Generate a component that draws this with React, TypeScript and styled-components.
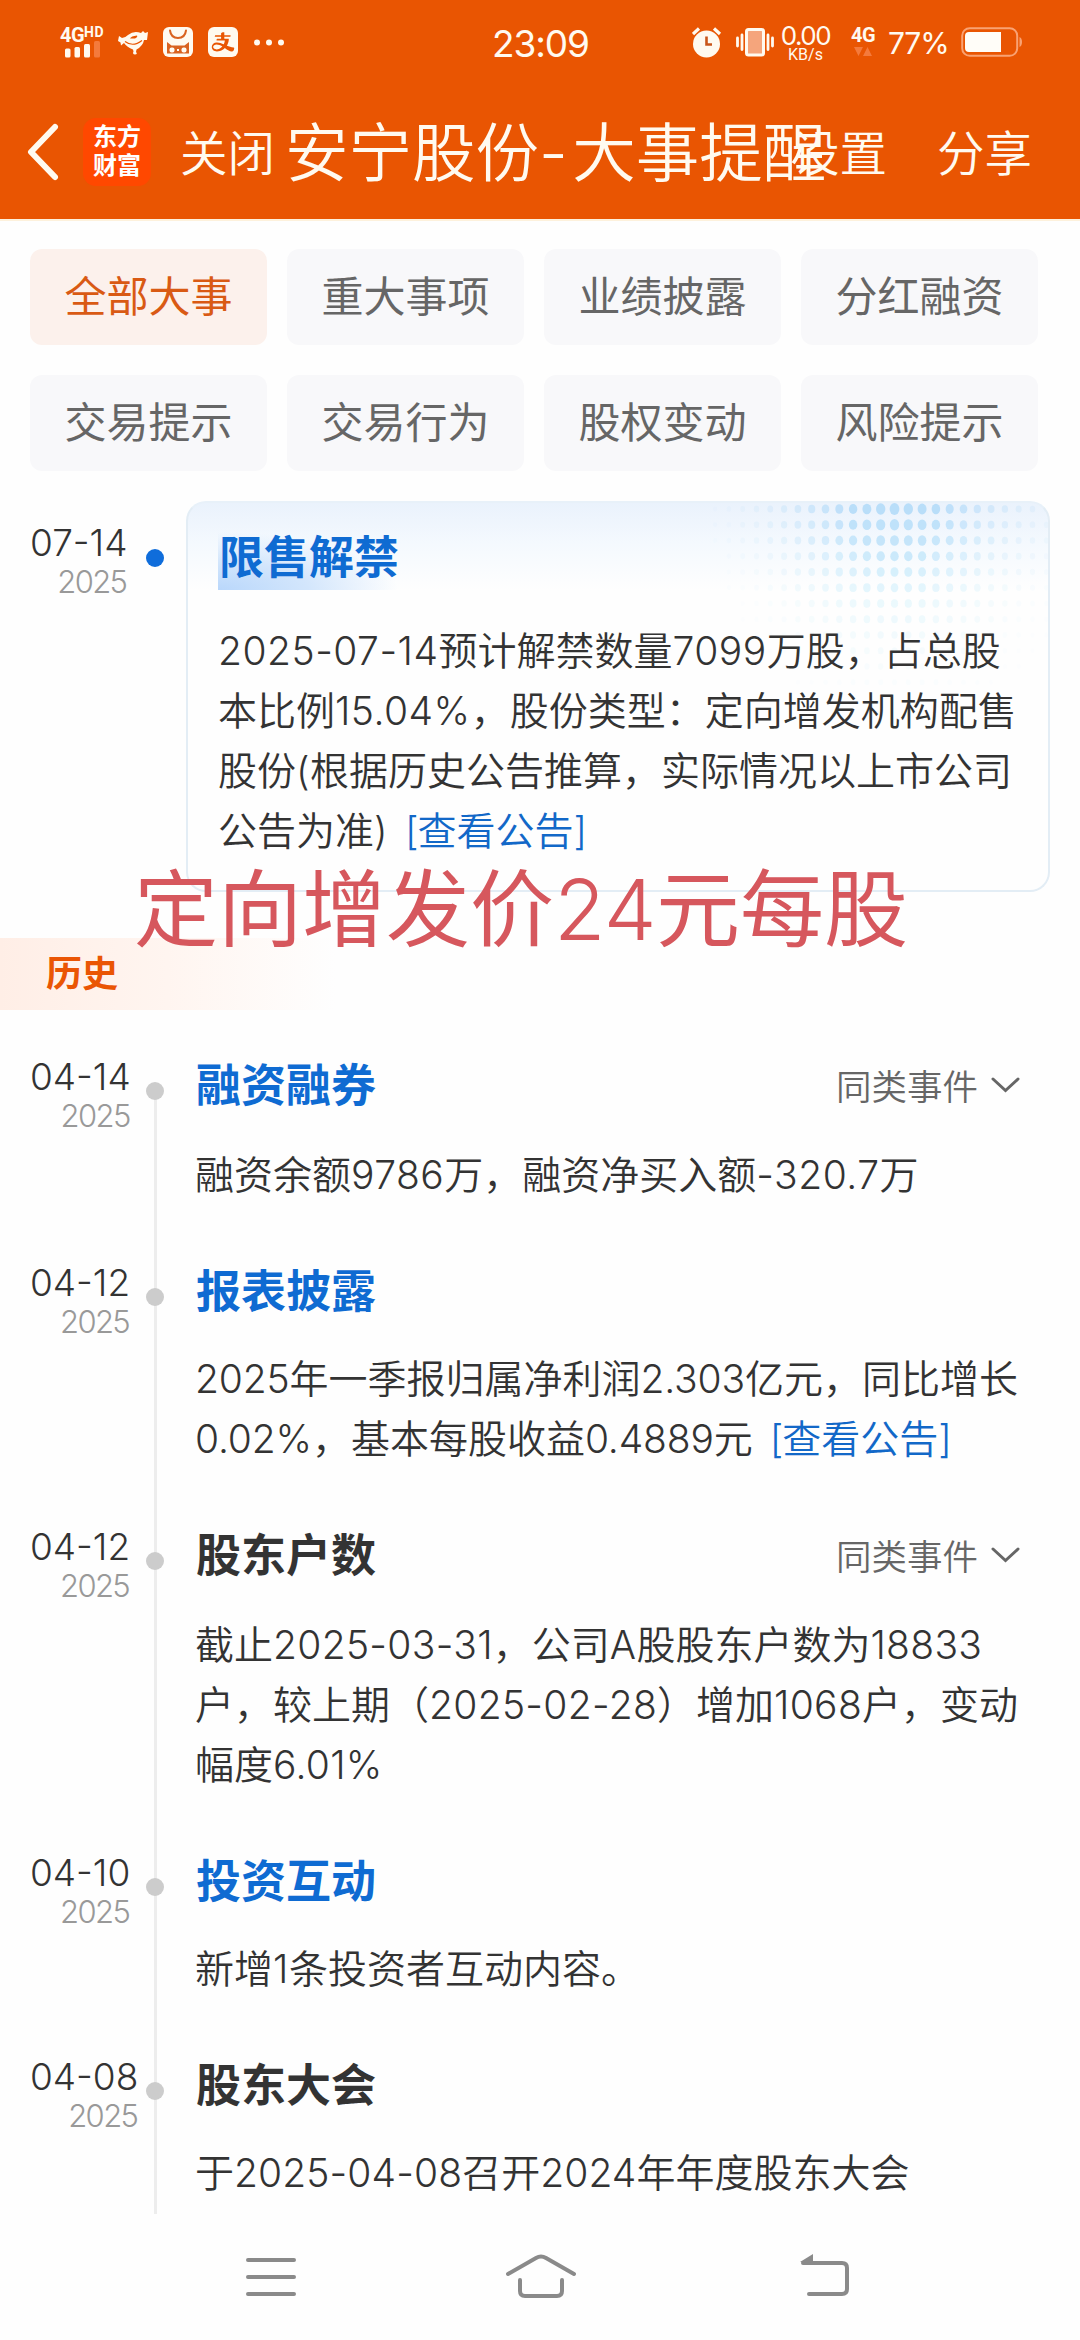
import React from 'react';
import styled, { createGlobalStyle } from 'styled-components';
import { AiFillAlipaySquare } from 'react-icons/ai';

const CJK = '"Noto Sans CJK SC", sans-serif';

const GlobalStyle = createGlobalStyle`
  * { box-sizing: border-box; }
  body { margin: 0; background: #fefefe; font-family: ${CJK}; }
`;

/* ---------- shared text ---------- */

const Latin = styled.span<{ $tight: number }>`
  font-family: Inter, Roboto, sans-serif;
  letter-spacing: ${(p) => p.$tight}em;
`;

/** Sets digits and latin signs in the numeric face, leaving Chinese text alone. */
function Mixed({ text, tight = 0.013 }: { text: string; tight?: number }) {
  const parts = text.split(/([0-9A-Za-z.\-%()[\]]+)/);
  return (
    <>
      {parts.map((part, i) =>
        i % 2 ? (
          <Latin key={i} $tight={tight}>{part}</Latin>
        ) : (
          part
        ),
      )}
    </>
  );
}

/* ---------- page ---------- */

const Screen = styled.div`
  position: relative;
  display: flex;
  flex-direction: column;
  width: 1080px;
  height: 2340px;
  overflow: hidden;
  background: #fefefe;
  color: #333;
`;

const Header = styled.header`
  flex: none;
  height: 221px;
  background: #e95502;
  border-bottom: 2px solid #fdf1dc;
  color: #fffaf0;
`;

/* ---------- status bar ---------- */

const StatusBar = styled.div`
  display: grid;
  grid-template-columns: 432px 1fr 388px;
  align-items: start;
  height: 84px;
  padding-left: 60px;
`;

const StatusGroup = styled.div`
  display: flex;
  align-items: flex-start;
  padding-top: 27px;
`;

const Signal = styled.div`
  width: 58px;
  height: 30px;
`;

const SmallSvg = styled.svg`
  display: block;
`;

const NetLabel = styled.div`
  display: flex;
  height: 16px;
  font: 700 20px/16px Roboto, sans-serif;
  letter-spacing: -0.5px;
`;

const HdLabel = styled.span`
  font: 700 14px/10px Roboto, sans-serif;
  letter-spacing: 0.4px;
`;

const StatusGlyph = styled.svg<{ $gap?: number }>`
  display: block;
  flex: none;
  margin-right: ${(p) => p.$gap ?? 0}px;
`;

const AlipayTile = styled.span`
  display: flex;
  align-items: center;
  justify-content: center;
  width: 30px;
  height: 30px;
  margin-right: 16px;
  border-radius: 6px;
  overflow: hidden;
  svg { flex: none; }
`;

const Clock = styled.div`
  padding-top: 21px;
  font: 400 37px/46px Inter, sans-serif;
  letter-spacing: -1.1px;
`;

const Rate = styled.div`
  width: 51px;
  margin: -4px 20px 0 6px;
  text-align: center;
  font: 400 26px/25px Inter, sans-serif;
  letter-spacing: -1.5px;
`;

const RateUnit = styled.div`
  font: 400 16px/14px Roboto, sans-serif;
  letter-spacing: 0;
`;

const Cell = styled.div`
  width: 37px;
`;

const Percent = styled.div`
  width: 73px;
  font: 400 30px/32px Inter, sans-serif;
  letter-spacing: -1.2px;
`;

/* ---------- title bar ---------- */

const TitleBar = styled.div`
  display: flex;
  align-items: center;
  height: 136px;
  padding-left: 26px;
  white-space: nowrap;
  font-weight: 350;
`;

const BackIcon = styled.svg`
  flex: none;
  margin-right: 23px;
`;

const Logo = styled.div`
  display: flex;
  flex-direction: column;
  justify-content: center;
  align-items: center;
  flex: none;
  width: 68px;
  height: 68px;
  padding-bottom: 7px;
  border-radius: 13px;
  background: #ff4800;
  color: #fff;
  font: 700 24px/29px ${CJK};
`;

const HeaderAction = styled.span<{ $left: number }>`
  flex: none;
  margin-left: ${(p) => p.$left}px;
  padding-bottom: 3px;
  font-size: 47.5px;
  line-height: 60px;
`;

const Title = styled.h1`
  flex: none;
  margin: 0 0 0 10px;
  padding-bottom: 4px;
  width: 542px;
  font-size: 63.5px;
  line-height: 80px;
  font-weight: 350;
`;

/* ---------- category tabs ---------- */

const Tabs = styled.nav`
  display: grid;
  grid-template-columns: repeat(4, 237px);
  grid-auto-rows: 96px;
  gap: 30px 20px;
  padding: 28px 30px 30px;
`;

const Tab = styled.button<{ $active: boolean }>`
  border: 0;
  padding: 0 0 7px;
  border-radius: 12px;
  background: ${(p) => (p.$active ? '#fcf1ec' : '#f8f8fa')};
  color: ${(p) => (p.$active ? '#d95a14' : '#666')};
  font: 400 42px/60px ${CJK};
`;

/* ---------- dates ---------- */

const DateCol = styled.div`
  flex: none;
  width: max-content;
  margin-left: 30px;
  text-align: right;
  font-family: Inter, sans-serif;
`;

const Day = styled.div`
  font-size: 37px;
  line-height: 46px;
  letter-spacing: 0;
  font-weight: 300;
`;

const Year = styled.div`
  padding-right: 1px;
  font-size: 31px;
  line-height: 32px;
  letter-spacing: -1.6px;
  color: #999;
  font-weight: 300;
`;

/* ---------- upcoming event ---------- */

const Upcoming = styled.section`
  display: grid;
  grid-template-columns: 186px 864px;
  height: 391px;
`;

const UpcomingDate = styled.div`
  position: relative;
  padding-top: 19px;
  display: flex;
`;

const Dot = styled.i<{ $color: string; $top: number }>`
  position: absolute;
  left: 146px;
  top: ${(p) => p.$top}px;
  width: 18px;
  height: 18px;
  border-radius: 50%;
  background: ${(p) => p.$color};
`;

const Card = styled.article`
  position: relative;
  border: 2px solid #e3edf5;
  border-top-color: #e8f1f9;
  border-radius: 20px;
  padding: 27px 0 0 30px;
  overflow: hidden;
  background: linear-gradient(#eaf2fc 0, #f4f9fe 40px, #fefefe 88px);
`;

const DotPattern = styled.svg`
  position: absolute;
  right: 0;
  top: 0;
`;

const CardTitle = styled.h2`
  position: relative;
  width: max-content;
  margin: 0 0 28px;
  height: 60px;
  padding-left: 1px;
  font-size: 45px;
  line-height: 50px;
  font-weight: 700;
  color: #0f6bd2;
  background: radial-gradient(ellipse 180px 58px at 0 100%, #b9d7fb 0, #d3e6fc 50%, rgba(235, 244, 254, 0) 100%);
`;

const Text = styled.p`
  position: relative;
  margin: 0;
  font-size: 39px;
  line-height: 60px;
  font-weight: 350;
  white-space: nowrap;
`;

const Line = styled.span`
  display: block;
  height: 60px;
`;

const NoticeLink = styled.a`
  margin-left: 17px;
  color: #1268c8;
`;

/* ---------- history ---------- */

const HistoryLabel = styled.div`
  width: 335px;
  height: 72px;
  margin: 46px 0 45px;
  padding-left: 46px;
  background: linear-gradient(90deg, #ffeee6, #fff5f0 50%, #fefefe);
  color: #ea5504;
  font-size: 36px;
  line-height: 67px;
  font-weight: 700;
`;

const Timeline = styled.section`
  flex: 1;
  min-height: 0;
  overflow: hidden;
`;

const Item = styled.article<{ $first: boolean }>`
  position: relative;
  display: grid;
  grid-template-columns: 195px 1fr;
  padding-bottom: 59px;
  background: linear-gradient(#ededed, #ededed) 154px ${(p) => (p.$first ? 36 : 0)}px / 3px 100% no-repeat;
`;

const ItemDate = styled.div`
  display: flex;
  align-items: flex-start;
  margin-top: -1px;
`;

const ItemHead = styled.div<{ $tall: boolean }>`
  display: flex;
  align-items: flex-start;
  justify-content: space-between;
  height: ${(p) => (p.$tall ? 87 : 85)}px;
  padding-right: 60px;
`;

const ItemTitle = styled.h3<{ $blue: boolean }>`
  margin: 0;
  padding-left: 1px;
  font-size: 45px;
  line-height: 56px;
  font-weight: 700;
  color: ${(p) => (p.$blue ? '#0f6bd2' : '#333')};
`;

const Similar = styled.span`
  display: flex;
  align-items: center;
  gap: 13px;
  font-size: 35.5px;
  line-height: 60px;
  font-weight: 350;
  color: #666;
`;

/* ---------- caption & navigation ---------- */

const Caption = styled.div`
  position: absolute;
  left: 134px;
  top: 846px;
  font-size: 84px;
  line-height: 116px;
  font-weight: 400;
  white-space: nowrap;
  color: #d6575d;
  ${Latin} { font-weight: 350; }
`;

const NavBar = styled.footer`
  flex: none;
  display: flex;
  justify-content: space-between;
  align-items: flex-start;
  height: 126px;
  padding: 39px 229px 0 244px;
`;

const HomeIcon = styled.svg`
  margin-right: 15px;
`;

/* ---------- data ---------- */

const tabs = ['全部大事', '重大事项', '业绩披露', '分红融资', '交易提示', '交易行为', '股权变动', '风险提示'];

interface EventItem {
  day: string;
  title: string;
  blue: boolean;
  similar?: boolean;
  link?: boolean;
  tight?: number;
  lines: string[];
}

const events: EventItem[] = [
  { day: '04-14', title: '融资融券', blue: true, similar: true, lines: ['融资余额9786万，融资净买入额-320.7万'] },
  {
    day: '04-12', title: '报表披露', blue: true, link: true, tight: -0.004,
    lines: ['2025年一季报归属净利润2.303亿元，同比增长', '0.02%，基本每股收益0.4889元'],
  },
  {
    day: '04-12', title: '股东户数', blue: false, similar: true, tight: 0.008,
    lines: ['截止2025-03-31，公司A股股东户数为18833', '户，较上期（2025-02-28）增加1068户，变动', '幅度6.01%'],
  },
  { day: '04-10', title: '投资互动', blue: true, lines: ['新增1条投资者互动内容。'] },
  { day: '04-08', title: '股东大会', blue: false, tight: 0.003, lines: ['于2025-04-08召开2024年年度股东大会'] },
];

const unlockLines = [
  '2025-07-14预计解禁数量7099万股，占总股',
  '本比例15.04%，股份类型：定向增发机构配售',
  '股份(根据历史公告推算，实际情况以上市公司',
  '公告为准)',
];

/* ---------- parts ---------- */

function Halftone() {
  const dots: React.ReactNode[] = [];
  for (let row = 0; row < 12; row++) {
    for (let col = -13; col <= 11; col++) {
      const span = col < 0 ? 14 : 14.5;
      const d = Math.sqrt((col / span) ** 2 + (row / 14) ** 2);
      const k = 1 - d;
      if (k <= 0.05) continue;
      const cx = 206.5 + col * 13.8;
      const cy = 6 + row * 15.75;
      const light = Math.min(1, row / 6);
      const fill = `rgb(${Math.round(182 + light * 36)}, ${Math.round(220 + light * 24)}, ${Math.round(249 + light * 3)})`;
      dots.push(<ellipse key={`${row}/${col}`} cx={cx} cy={cy} rx={1.8 + 3.1 * k} ry={2.2 + 3.7 * k} fill={fill} opacity={Math.min(0.95, k * k * 1.5 + 0.05)} />);
    }
  }
  return <DotPattern width="360" height="200">{dots}</DotPattern>;
}

function Notice() {
  return <NoticeLink><Mixed text="[查看公告]" tight={-0.03} /></NoticeLink>;
}

function Body({ lines, link, tight }: { lines: string[]; link?: boolean; tight?: number }) {
  return (
    <Text>
      {lines.map((line, i) => (
        <Line key={i}>
          <Mixed text={line} tight={tight} />
          {link && i === lines.length - 1 && <Notice />}
        </Line>
      ))}
    </Text>
  );
}

function Status() {
  return (
    <StatusBar>
      <StatusGroup>
        <Signal>
          <NetLabel>4G<HdLabel>HD</HdLabel></NetLabel>
          <SmallSvg width="48" height="16" viewBox="0 0 48 16" overflow="visible">
            <rect x="5" y="5.500" width="5.500" height="9" rx="1.500" fill="#fffaf0" />
            <rect x="14.500" y="4" width="5.500" height="10.500" rx="1.500" fill="#fffaf0" />
            <rect x="24" y="1" width="6" height="13.500" rx="1.500" fill="#fffaf0" />
            <rect x="34" y="-2" width="6" height="16.500" rx="1.500" fill="#f47a3c" />
          </SmallSvg>
        </Signal>
        <StatusGlyph width="30" height="30" $gap={15} viewBox="0 0 30 30">
          <path d="M0 14 L1 9 L4 11 Q7 11 10 8 Q16 3 23 6 L25 4 L27 6 L30 5 L29 13 L26 13 Q25 19 18.500 22.500 L18 25 Q20 27 17 27.500 Q14 27 15.500 24.500 L15 22.500 Q9 20 6 16 L3 18.500 L2.500 15.500 Z" fill="#fffaf0" />
          <path d="M7 14.500 Q15 20.500 24 13.500" fill="none" stroke="#e95502" strokeWidth="1.100" />
          <path d="M12 11.500 Q13 9 19 8.500 Q20 10 17 11.500 Z" fill="#e95502" />
        </StatusGlyph>
        <StatusGlyph width="30" height="30" $gap={15} viewBox="0 0 30 30">
          <rect width="30" height="30" rx="6" fill="#fffaf0" />
          <path d="M7 3.500 Q8 11 15 11 Q22 11 23 3.500" fill="none" stroke="#d9621f" strokeWidth="2" strokeLinecap="round" />
          <path d="M4 15 L8.500 18.500 H21.500 L26 15 V26.500 H4 Z" fill="#d9621f" />
          <rect x="6.500" y="20.500" width="5" height="5" rx="2" fill="#fffaf0" />
          <rect x="18.500" y="20.500" width="5" height="5" rx="2" fill="#fffaf0" />
          <rect x="14" y="22" width="2" height="2" fill="#fffaf0" />
        </StatusGlyph>
        <AlipayTile><AiFillAlipaySquare size={40} color="#fffaf0" /></AlipayTile>
        <StatusGlyph width="32" height="30" viewBox="0 0 32 30">
          {[3, 15, 27].map((x) => <circle key={x} cx={x} cy="15.500" r="3" fill="#fffaf0" />)}
        </StatusGlyph>
      </StatusGroup>
      <Clock>23:09</Clock>
      <StatusGroup>
        <StatusGlyph width="30" height="31" $gap={14} viewBox="0 0 30 31">
          <circle cx="14.500" cy="17" r="13.500" fill="#fffaf0" />
          <path d="M1 7 L7 1.500 M28 7 L22 1.500" stroke="#fffaf0" strokeWidth="3.200" />
          <path d="M14.500 9.500 V17.500 H20" fill="none" stroke="#c9551a" strokeWidth="2.600" />
        </StatusGlyph>
        <StatusGlyph width="38" height="30" viewBox="0 0 38 30">
          <rect x="10.500" y="2.500" width="17" height="25.500" rx="2" fill="#f5a57c" stroke="#fffaf0" strokeWidth="3" />
          <path d="M1.500 11 V19 M6 8 V22.500 M32 8 V22.500 M36.500 11 V19" stroke="#fffaf0" strokeWidth="2.800" strokeLinecap="round" />
        </StatusGlyph>
        <Rate>0.00<RateUnit>KB/s</RateUnit></Rate>
        <Cell>
          <NetLabel>4G</NetLabel>
          <SmallSvg width="24" height="14" viewBox="0 0 24 14">
            <path d="M3 4 H12 L7.500 13 Z M12 13 H21 L16.500 4 Z" fill="#f47a3c" />
          </SmallSvg>
        </Cell>
        <Percent>77%</Percent>
        <StatusGlyph width="62" height="30" viewBox="0 0 62 30">
          <rect x="1.200" y="1.200" width="55" height="27.600" rx="7.500" fill="none" stroke="#f9a273" strokeWidth="2" />
          <path d="M58.500 10 Q61 11 61 15 Q61 19 58.500 20 Z" fill="#f9a273" />
          <path d="M8 5 H40 V25 H8 Q4 25 4 21 V9 Q4 5 8 5 Z" fill="#fffdf8" />
        </StatusGlyph>
      </StatusGroup>
    </StatusBar>
  );
}

export default function App() {
  return (
    <Screen>
      <GlobalStyle />
      <Header>
        <Status />
        <TitleBar>
          <BackIcon width="34" height="60" viewBox="0 0 34 60" fill="none" stroke="#fffaf0" strokeWidth="6" strokeLinecap="round" strokeLinejoin="round">
            <path d="M29 5 L5 30 L29 55" />
          </BackIcon>
          <Logo><span>东方</span><span>财富</span></Logo>
          <HeaderAction $left={29}>关闭</HeaderAction>
          <Title><Mixed text="安宁股份-大事提醒" tight={0.07} /></Title>
          <HeaderAction $left={-35}>设置</HeaderAction>
          <HeaderAction $left={50}>分享</HeaderAction>
        </TitleBar>
      </Header>

      <Tabs>
        {tabs.map((t, i) => <Tab key={t} $active={i === 0}>{t}</Tab>)}
      </Tabs>

      <Upcoming>
        <UpcomingDate>
          <DateCol><Day>07-14</Day><Year>2025</Year></DateCol>
          <Dot $color="#0f6ddb" $top={48} />
        </UpcomingDate>
        <Card>
          <Halftone />
          <CardTitle>限售解禁</CardTitle>
          <Body lines={unlockLines} link />
        </Card>
      </Upcoming>

      <HistoryLabel>历史</HistoryLabel>

      <Timeline>
        {events.map((e, i) => (
          <Item key={i} $first={i === 0}>
            <ItemDate>
              <DateCol><Day>{e.day}</Day><Year>2025</Year></DateCol>
              <Dot $color="#ccc" $top={27} />
            </ItemDate>
            <div>
              <ItemHead $tall={!!e.similar}>
                <ItemTitle $blue={e.blue}>{e.title}</ItemTitle>
                {e.similar && (
                  <Similar>
                    同类事件
                    <svg width="29" height="18" viewBox="0 0 29 18" fill="none" stroke="#666" strokeWidth="3" strokeLinecap="round">
                      <path d="M2 3 L14.500 14.500 L27 3" />
                    </svg>
                  </Similar>
                )}
              </ItemHead>
              <Body lines={e.lines} link={e.link} tight={e.tight} />
            </div>
          </Item>
        ))}
      </Timeline>

      <Caption><Mixed text="定向增发价24元每股" tight={-0.007} /></Caption>

      <NavBar>
        <svg width="54" height="48" viewBox="0 0 54 48" stroke="#8a8a8a" strokeWidth="4" strokeLinecap="round">
          <path d="M4 7 H50 M4 24 H50 M4 41 H50" />
        </svg>
        <HomeIcon width="74" height="48" viewBox="0 0 74 48" fill="none" stroke="#8a8a8a" strokeWidth="4" strokeLinecap="round">
          <path d="M4 21 L32 5 Q37 2 42 5 L70 21 M16 27 V38 Q16 43 21 43 H53 Q58 43 58 38 V27" />
        </HomeIcon>
        <svg width="52" height="48" viewBox="0 0 52 48" fill="none" stroke="#8a8a8a" strokeWidth="4" strokeLinecap="round">
          <path d="M4 10 H43 Q48 10 48 15 V36 Q48 41 43 41 H10" />
          <path d="M1 9 L14 1 V10 Z" fill="#8a8a8a" stroke="none" />
        </svg>
      </NavBar>
    </Screen>
  );
}
